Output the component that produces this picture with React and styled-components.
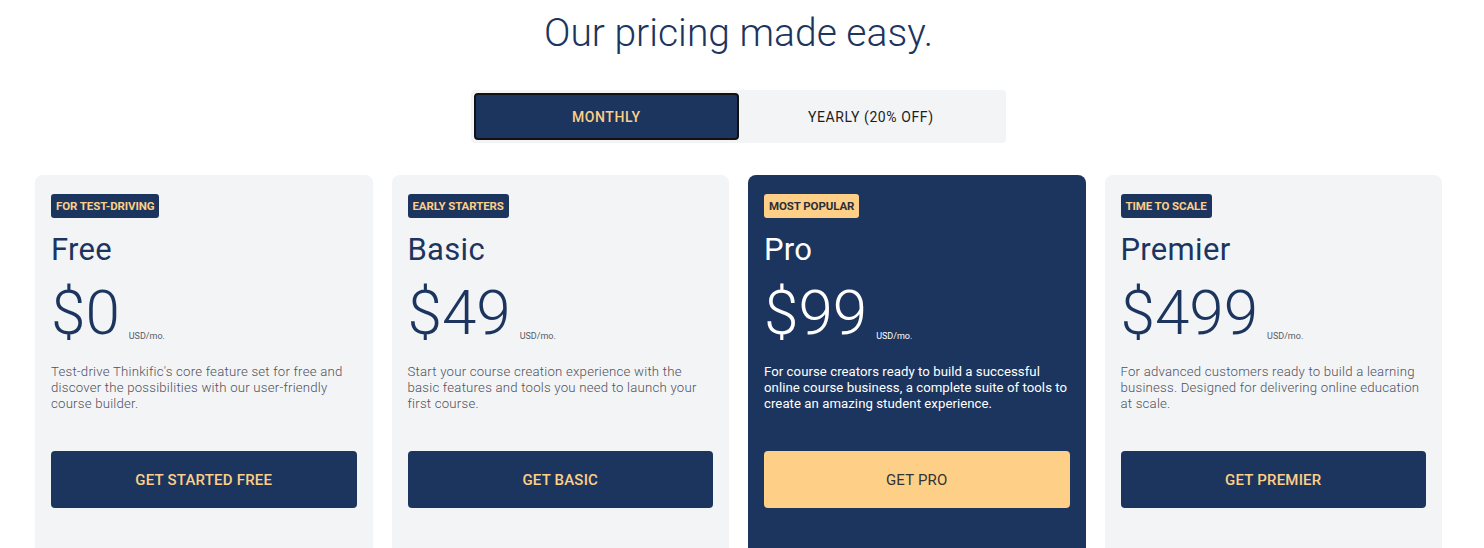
import React, { useState } from "react";
import styled, { createGlobalStyle } from "styled-components";

const navy = "#1c355e";
const peach = "#fecf87";
const light = "#f3f4f6";

const GlobalStyle = createGlobalStyle`
  * { box-sizing: border-box; }
  body {
    margin: 0;
    background: #fff;
    font-family: Roboto, "Liberation Sans", sans-serif;
    color: ${navy};
  }
`;

const Page = styled.div`
  padding: 8px 42px 0 35px;
  height: 548px;
  overflow: hidden;
`;

const Title = styled.h1`
  margin: 0;
  text-align: center;
  font-size: 39px;
  line-height: 50px;
  font-weight: 300;
  letter-spacing: 0;
  color: ${navy};
`;

const Toggle = styled.div`
  width: 535px;
  margin: 32px auto 0;
  padding: 3px;
  display: flex;
  background: ${light};
  border-radius: 4px;
`;

const ToggleOption = styled.button`
  flex: 1;
  height: 47px;
  border: 2px solid ${(p) => (p.$active ? "#111" : "transparent")};
  border-radius: 4px;
  background: ${(p) => (p.$active ? navy : "transparent")};
  color: ${(p) => (p.$active ? peach : "#1d1d1d")};
  font-family: inherit;
  font-size: 14px;
  font-weight: ${(p) => (p.$active ? 500 : 400)};
  letter-spacing: 0.6px;
  cursor: pointer;
`;

const Grid = styled.div`
  margin-top: 32px;
  display: grid;
  grid-template-columns: repeat(4, 1fr);
  gap: 19px;
`;

const Card = styled.div`
  height: 400px;
  padding: 19px 16px 0;
  border-radius: 8px;
  background: ${(p) => (p.$featured ? navy : light)};
  color: ${(p) => (p.$featured ? "#fff" : navy)};
  display: flex;
  flex-direction: column;
  align-items: flex-start;
`;

const Badge = styled.span`
  height: 24px;
  padding: 0 5px;
  display: inline-flex;
  align-items: center;
  border-radius: 3px;
  background: ${(p) => (p.$featured ? peach : navy)};
  color: ${(p) => (p.$featured ? "#2a2f3a" : peach)};
  font-size: 11.5px;
  font-weight: 700;
  letter-spacing: -0.1px;
  text-transform: uppercase;
`;

const PlanName = styled.h2`
  margin: 13px 0 0;
  font-size: 31px;
  line-height: 38px;
  font-weight: 400;
  letter-spacing: 0.3px;
`;

const PriceRow = styled.div`
  margin-top: 8px;
  display: flex;
  align-items: baseline;
  gap: 9px;
`;

const Price = styled.span`
  font-size: 62px;
  line-height: 72px;
  font-weight: 300;
  letter-spacing: 0;
`;

const Unit = styled.span`
  font-size: 9px;
  transform: translateY(5px);
  color: ${(p) => (p.$featured ? "#fff" : "#555b66")};
`;

const Desc = styled.p`
  margin: 15px 0 0;
  min-height: 48px;
  font-size: 13.2px;
  line-height: 16px;
  letter-spacing: ${(p) => (p.$featured ? "0.05px" : "0.22px")};
  font-weight: ${(p) => (p.$featured ? 400 : 300)};
  color: ${(p) => (p.$featured ? "#fff" : "#4d525c")};
`;

const Cta = styled.button`
  margin-top: 39px;
  width: 100%;
  height: 57px;
  border: none;
  border-radius: 4px;
  background: ${(p) => (p.$featured ? peach : navy)};
  color: ${(p) => (p.$featured ? "#333" : peach)};
  font-family: inherit;
  font-size: 15px;
  font-weight: ${(p) => (p.$featured ? 400 : 500)};
  letter-spacing: 0.2px;
  cursor: pointer;
`;

const plans = [
  {
    badge: "For test-driving",
    name: "Free",
    price: "$0",
    desc: "Test-drive Thinkific's core feature set for free and discover the possibilities with our user-friendly course builder.",
    cta: "GET STARTED FREE",
  },
  {
    badge: "Early starters",
    name: "Basic",
    price: "$49",
    desc: "Start your course creation experience with the basic features and tools you need to launch your first course.",
    cta: "GET BASIC",
  },
  {
    badge: "Most popular",
    name: "Pro",
    price: "$99",
    desc: "For course creators ready to build a successful online course business, a complete suite of tools to create an amazing student experience.",
    cta: "GET PRO",
    featured: true,
  },
  {
    badge: "Time to scale",
    name: "Premier",
    price: "$499",
    desc: "For advanced customers ready to build a learning business. Designed for delivering online education at scale.",
    cta: "GET PREMIER",
  },
];

export default function App() {
  const [billing, setBilling] = useState("monthly");

  return (
    <Page>
      <GlobalStyle />
      <Title>Our pricing made easy.</Title>
      <Toggle>
        <ToggleOption $active={billing === "monthly"} onClick={() => setBilling("monthly")}>
          MONTHLY
        </ToggleOption>
        <ToggleOption $active={billing === "yearly"} onClick={() => setBilling("yearly")}>
          YEARLY (20% OFF)
        </ToggleOption>
      </Toggle>
      <Grid>
        {plans.map((plan) => (
          <Card key={plan.name} $featured={plan.featured}>
            <Badge $featured={plan.featured}>{plan.badge}</Badge>
            <PlanName>{plan.name}</PlanName>
            <PriceRow>
              <Price>{plan.price}</Price>
              <Unit $featured={plan.featured}>USD/mo.</Unit>
            </PriceRow>
            <Desc $featured={plan.featured}>{plan.desc}</Desc>
            <Cta $featured={plan.featured}>{plan.cta}</Cta>
          </Card>
        ))}
      </Grid>
    </Page>
  );
}
